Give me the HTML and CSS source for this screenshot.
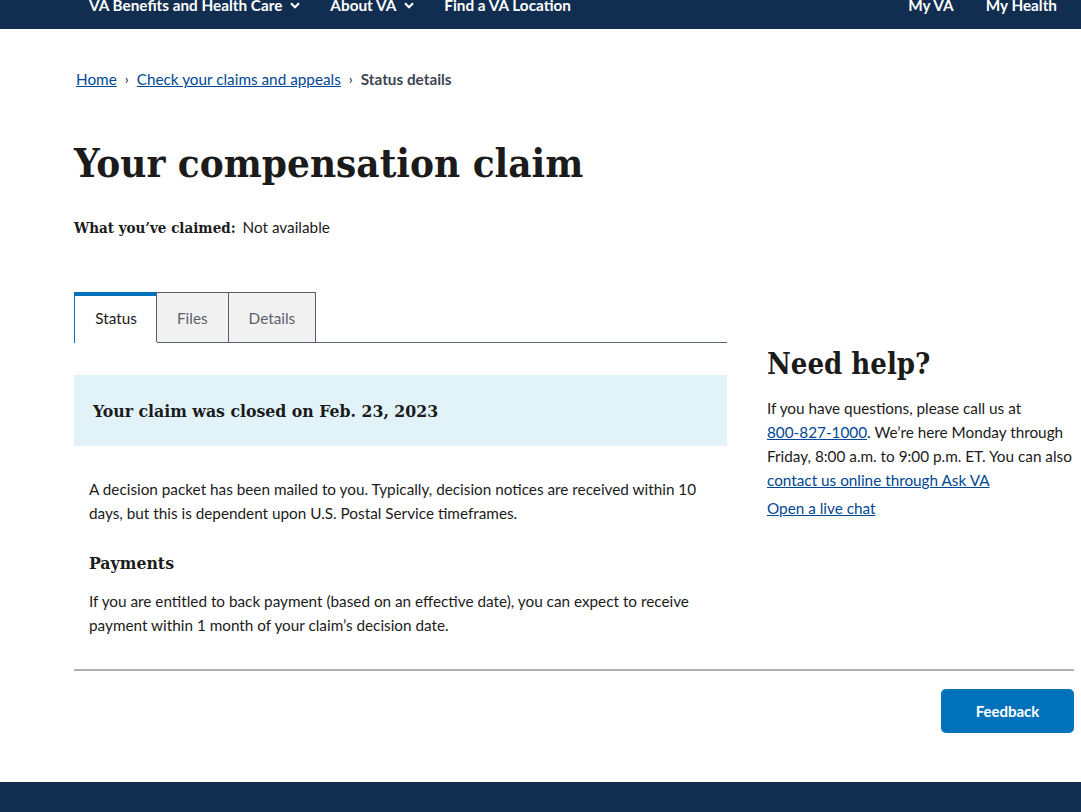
FILE: index.html
```html
<!DOCTYPE html>
<html lang="en">
<head>
<meta charset="utf-8">
<title>Your compensation claim</title>
<link rel="stylesheet" href="styles.css">
</head>
<body>
<header class="topnav">
  <nav class="nav-left">
    <a class="nav-item" href="#">VA Benefits and Health Care <svg class="chev" viewBox="0 0 10 7" width="10" height="7"><path d="M1 1.2 L5 5.2 L9 1.2" fill="none" stroke="#fff" stroke-width="2.2"/></svg></a>
    <a class="nav-item" href="#">About VA <svg class="chev" viewBox="0 0 10 7" width="10" height="7"><path d="M1 1.2 L5 5.2 L9 1.2" fill="none" stroke="#fff" stroke-width="2.2"/></svg></a>
    <a class="nav-item" href="#">Find a VA Location</a>
  </nav>
  <nav class="nav-right">
    <a class="nav-item" href="#">My VA</a>
    <a class="nav-item" href="#">My Health</a>
  </nav>
</header>

<main class="page">
  <ol class="breadcrumbs">
    <li><a href="#">Home</a></li>
    <li class="sep">›</li>
    <li><a href="#">Check your claims and appeals</a></li>
    <li class="sep">›</li>
    <li class="current">Status details</li>
  </ol>

  <h1 class="title">Your compensation claim</h1>
  <p class="claimed"><strong>What you’ve claimed:</strong> Not available</p>

  <div class="layout">
    <section class="main-col">
      <div class="tabs">
        <a class="tab active" href="#">Status</a>
        <a class="tab" href="#">Files</a>
        <a class="tab" href="#">Details</a>
      </div>
      <div class="alert">
        <h2 class="alert-title">Your claim was closed on Feb. 23, 2023</h2>
      </div>
      <div class="body-text">
        <p>A decision packet has been mailed to you. Typically, decision notices are received within 10 days, but this is dependent upon U.S. Postal Service timeframes.</p>
        <h3 class="sub">Payments</h3>
        <p>If you are entitled to back payment (based on an effective date), you can expect to receive payment within 1 month of your claim’s decision date.</p>
      </div>
    </section>
    <aside class="side-col">
      <h2 class="help-title">Need help?</h2>
      <p class="help-text">If you have questions, please call us at <a class="phone" href="#">800-827-1000</a>. We’re here Monday through Friday, 8:00 a.m. to 9:00 p.m. ET. You can also <a href="#">contact us online through Ask VA</a></p>
      <p class="help-chat"><a href="#">Open a live chat</a></p>
    </aside>
  </div>

  <hr class="divider">
  <div class="feedback-row">
    <button class="feedback">Feedback</button>
  </div>
</main>
<footer class="footer"></footer>
</body>
</html>
```

FILE: styles.css
```css
* { box-sizing: border-box; }
html, body { margin: 0; padding: 0; }
body {
  font-family: "Lato", "Open Sans", sans-serif;
  color: #1b1b1b;
  background: #fff;
  font-size: 15.3px;
}
a { color: #004795; }

.topnav {
  background: #112e51;
  height: 29px;
  display: flex;
  justify-content: space-between;
  align-items: flex-start;
  padding: 0 24px 0 89px;
}
.nav-left, .nav-right { display: flex; }
.nav-left { gap: 30px; }
.nav-right { gap: 32px; }
.nav-item {
  color: #fff;
  text-decoration: none;
  font-weight: 700;
  font-size: 15.3px;
  line-height: 14px;
  display: flex;
  align-items: center;
  gap: 8px;
  margin-top: -2px;
}
.chev { display: block; }

.page {
  padding: 0 7px 0 74px;
}
.breadcrumbs {
  list-style: none;
  margin: 0;
  padding: 38px 0 0 2px;
  display: flex;
  gap: 8px;
  font-size: 15.3px;
  line-height: 24px;
}
.breadcrumbs .sep { color: #1b1b1b; font-size: 14px; }
.breadcrumbs .current { font-weight: 700; color: #3d4551; }

.title {
  font-family: "DejaVu Serif Condensed", "DejaVu Serif", serif;
  font-weight: 700;
  font-size: 40px;
  line-height: 52px;
  margin: 46px 0 0 0;
  color: #1b1b1b;
}
.claimed {
  margin: 26px 0 0 0;
  font-size: 15.3px;
  line-height: 24px;
}
.claimed strong {
  font-family: "DejaVu Serif Condensed", "DejaVu Serif", serif;
  font-size: 15px;
  margin-right: 3px;
}

.layout {
  display: grid;
  grid-template-columns: 653px 1fr;
  column-gap: 40px;
  margin-top: 52px;
}

.tabs {
  display: flex;
  border-bottom: 1px solid #5b616b;
  height: 51px;
}
.tab {
  display: flex;
  align-items: center;
  justify-content: center;
  text-decoration: none;
  color: #5b616b;
  background: #f1f1f1;
  border: 1px solid #5b616b;
  border-bottom: none;
  font-size: 15.3px;
  padding: 0 20px;
  height: 50px;
  margin-left: -1px;
}
.tab:first-child { margin-left: 0; }
.tab.active {
  background: #fff;
  color: #1b1b1b;
  border: none;
  border-left: 1px solid #0071bb;
  border-top: 4px solid #0071bb;
  height: 51px;
  margin-bottom: -1px;
  padding-bottom: 4px;
  width: 83px;
}

.alert {
  background: #e1f3f8;
  margin-top: 32px;
  height: 71px;
  display: flex;
  align-items: center;
  padding: 0 19px;
}
.alert-title {
  font-family: "DejaVu Serif Condensed", "DejaVu Serif", serif;
  font-size: 17.5px;
  font-weight: 700;
  margin: 0;
}
.body-text { padding: 0 15px; }
.body-text p { margin: 31px 0 0 0; line-height: 24px; }
.body-text .sub {
  font-family: "DejaVu Serif Condensed", "DejaVu Serif", serif;
  font-size: 17.5px;
  font-weight: 700;
  margin: 26px 0 0 0;
  line-height: 24px;
}
.body-text .sub + p { margin-top: 14px; }

.side-col { padding-top: 52px; }
.help-title {
  font-family: "DejaVu Serif Condensed", "DejaVu Serif", serif;
  font-size: 29px;
  line-height: 40px;
  font-weight: 700;
  margin: 0;
}
.help-text {
  margin: 12px 0 0 0;
  line-height: 24px;
}
.phone { white-space: nowrap; }
.help-chat { margin: 4px 0 0 0; line-height: 24px; }

.divider {
  border: none;
  border-top: 2px solid #aeb0b5;
  margin: 32px 0 0 0;
}
.feedback-row {
  display: flex;
  justify-content: flex-end;
  padding-top: 18px;
  height: 111px;
}
.feedback {
  background: #0071bb;
  color: #fff;
  border: none;
  border-radius: 5px;
  font-family: "Lato", sans-serif;
  font-weight: 700;
  font-size: 15px;
  width: 133px;
  height: 44px;
}
.footer {
  background: #112e51;
  height: 60px;
}
```
